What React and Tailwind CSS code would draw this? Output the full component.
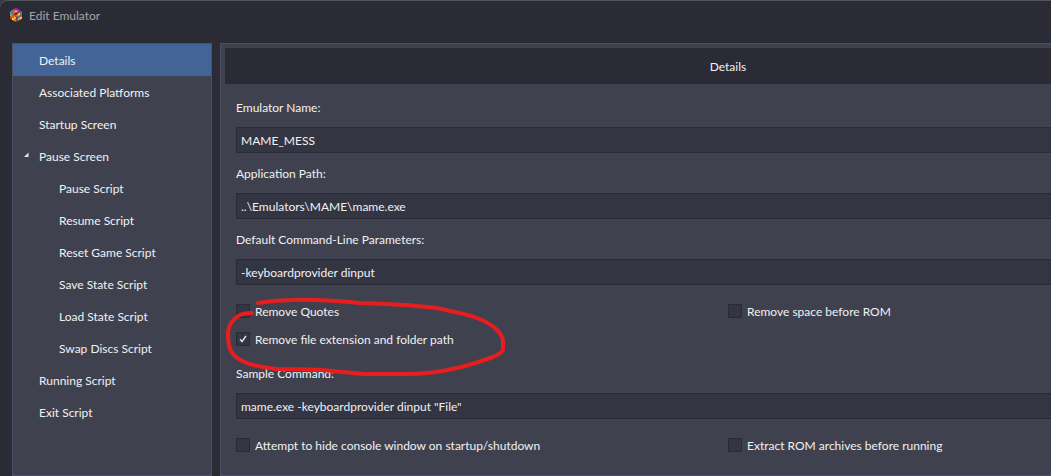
import { useState } from "react";

const sections = [
  { name: "Details" },
  { name: "Associated Platforms" },
  { name: "Startup Screen" },
  { name: "Pause Screen", open: true },
  { name: "Pause Script", child: true },
  { name: "Resume Script", child: true },
  { name: "Reset Game Script", child: true },
  { name: "Save State Script", child: true },
  { name: "Load State Script", child: true },
  { name: "Swap Discs Script", child: true },
  { name: "Running Script" },
  { name: "Exit Script" },
];

function CubeLogo() {
  return (
    <svg viewBox="0 0 14 14" className="size-[14px] shrink-0" aria-hidden="true">
      <path d="M7 0 13 3.2 7 6.6 1 3.2Z" fill="#5c1f66" />
      <path d="M1 3.2 7 6.6V14L1 10.6Z" fill="#7a2a20" />
      <path d="M13 3.2 7 6.6V14L13 10.6Z" fill="#7a2a20" />
      <path d="M7 0 9 1.1 7 2.2 5 1.1Z" fill="#a02fb4" />
      <path d="M5 1.1 7 2.2 5 3.3 3 2.2Z" fill="#e8502a" />
      <path d="M9 1.1 11 2.2 9 3.3 7 2.2Z" fill="#b02fc0" />
      <path d="M7 2.2 9 3.3 7 4.4 5 3.3Z" fill="#f5c42c" />
      <path d="M11 2.2 13 3.2 11 4.4 9 3.3Z" fill="#a02fb4" />
      <path d="M3 2.2 5 3.3 3 4.4 1 3.2Z" fill="#2aa5ea" />
      <path d="M9 3.3 11 4.4 9 5.5 7 4.4Z" fill="#ec3a2a" />
      <path d="M5 3.3 7 4.4 5 5.5 3 4.4Z" fill="#ef7d22" />
      <path d="M1 3.4 3 4.5V7L1 5.8Z" fill="#27b4ea" />
      <path d="M3 4.5 5 5.6V8L3 7Z" fill="#2b8fe8" />
      <path d="M5 5.6 7 6.7V9.2L5 8Z" fill="#ec3a2a" />
      <path d="M1 5.8 3 7V9.4L1 8.2Z" fill="#ef7d22" />
      <path d="M3 7 5 8V10.4L3 9.4Z" fill="#ec4a2a" />
      <path d="M5 8 7 9.2V11.5L5 10.4Z" fill="#f1e22d" />
      <path d="M3 9.4 5 10.4V12.8L3 11.7Z" fill="#f1e22d" />
      <path d="M1 8.2 3 9.4V11.7L1 10.6Z" fill="#e3332b" />
      <path d="M5 10.4 7 11.5V14L5 12.8Z" fill="#ef7d22" />
      <path d="M9 5.6 11 4.5V7L9 8Z" fill="#f1e22d" />
      <path d="M7 6.7 9 5.6V8L7 9.2Z" fill="#ef7d22" />
      <path d="M11 4.5 13 3.4V5.8L11 7Z" fill="#2b9fe0" />
      <path d="M7 9.2 9 8V10.4L7 11.5Z" fill="#a02fb4" />
      <path d="M9 8 11 7V9.4L9 10.4Z" fill="#2b8fe8" />
      <path d="M11 7 13 5.8V8.2L11 9.4Z" fill="#e3332b" />
      <path d="M9 10.4 11 9.4V11.7L9 12.8Z" fill="#8fc63a" />
      <path d="M11 9.4 13 8.2V10.6L11 11.7Z" fill="#f1e22d" />
      <path d="M7 11.5 9 10.4V12.8L7 14Z" fill="#e3332b" />
      <path d="M1 3.2 7 6.6 13 3.2M7 6.6V14" fill="none" stroke="#2b2b35" strokeWidth=".4" />
    </svg>
  );
}

function Field({ id, label, value }) {
  return (
    <div className="mb-[11px]">
      <label htmlFor={id} className="block leading-5">
        {label}
      </label>
      <input
        id={id}
        type="text"
        defaultValue={value}
        className="mt-[9px] block h-[26px] w-full border border-[#2a2b34] bg-[#343542] px-1 outline-none focus:border-[#426496]"
      />
    </div>
  );
}

function Check({ label, checked = false }) {
  return (
    <label className="flex h-7 items-center gap-[5px]">
      <span className="grid size-[14px] shrink-0 place-items-center">
        <input
          type="checkbox"
          defaultChecked={checked}
          className="peer col-start-1 row-start-1 size-[14px] appearance-none border border-[#2a2b34] bg-[#343542]"
        />
        <svg
          viewBox="0 0 14 14"
          className="pointer-events-none invisible col-start-1 row-start-1 size-[14px] peer-checked:visible"
          aria-hidden="true"
        >
          <path d="M4 7.2 6 9.6 10 3.8" fill="none" stroke="#f2f2f2" strokeWidth="1.3" />
        </svg>
      </span>
      <span className="pt-0.5 leading-5">{label}</span>
    </label>
  );
}

function Sidebar({ selected, onSelect }) {
  return (
    <nav className="w-[200px] shrink-0 border border-[#4d4f62] bg-[#40414e]">
      <ul>
        {sections.map((s) => (
          <li key={s.name}>
            <button
              type="button"
              onClick={() => onSelect(s.name)}
              className={`flex h-8 w-full items-center text-left ${s.child ? "pl-[46px]" : "pl-[10px]"} ${
                s.name === selected ? "bg-[#426496]" : ""
              }`}
            >
              {!s.child && (
                <svg viewBox="0 0 16 16" className="size-4 shrink-0" aria-hidden="true">
                  {s.open && <path d="M5.5 4.5V9H1Z" fill="#e6e6ea" />}
                </svg>
              )}
              <span className="pt-0.5">{s.name}</span>
            </button>
          </li>
        ))}
      </ul>
    </nav>
  );
}

export default function App() {
  const [selected, setSelected] = useState("Details");
  return (
    <div className="h-screen overflow-hidden bg-[#3c3c3e] font-[Lato,'Open_Sans',sans-serif] text-[12px] text-[#f1f1f3]">
      <div className="relative flex h-full min-w-[1248px] flex-col overflow-hidden rounded-tl-lg border-t border-[#555659] bg-[#2b2b35]">
        <header className="flex h-[42px] shrink-0 items-start gap-[6px] pt-[7px] pl-[9px] text-[#a3a3a8]">
          <CubeLogo />
          <h1 className="leading-4">Edit Emulator</h1>
        </header>
        <div className="flex grow gap-2 px-3">
          <Sidebar selected={selected} onSelect={setSelected} />
          <main className="grow border border-[#4d4f62] bg-[#40414e] p-1">
            <h2 className="flex h-9 items-center justify-center bg-[#2b2b35] pt-0.5">Details</h2>
            <form className="px-[11px] pt-[14px]">
              <Field id="name" label="Emulator Name:" value="MAME_MESS" />
              <Field id="path" label="Application Path:" value="..\Emulators\MAME\mame.exe" />
              <Field id="params" label="Default Command-Line Parameters:" value="-keyboardprovider dinput" />
              <div className="mb-[11px] grid grid-cols-2 pt-px">
                <Check label="Remove Quotes" />
                <Check label="Remove space before ROM" />
                <Check label="Remove file extension and folder path" checked />
              </div>
              <Field id="sample" label="Sample Command:" value={'mame.exe -keyboardprovider dinput "File"'} />
              <div className="grid grid-cols-2 pt-px">
                <Check label="Attempt to hide console window on startup/shutdown" />
                <Check label="Extract ROM archives before running" />
              </div>
            </form>
          </main>
        </div>
        <svg
          viewBox="220 294 290 86"
          className="pointer-events-none absolute top-[293px] left-[220px] h-[86px] w-[290px]"
          aria-hidden="true"
        >
          <path
            d="M258 303C270 301 280 300 293 300C316 299 338 301 360 303C380 304 398 304 417 306C430 307 440 308 450 311C460 313 469 315 477 318C485 321 492 325 497 330C501 334 503 338 503 342V350C501 353 498 355 493 357C482 361 470 365 457 368C440 372 423 374 407 374H363C352 373 343 372 333 371C314 369 295 369 277 369C268 368 261 367 253 365C246 363 241 361 236 357C232 354 230 350 229 345C228 341 228 336 228 332C229 328 229 326 231 323C234 319 236 317 240 315C244 313 248 313 252 313"
            fill="none"
            stroke="#e81e1e"
            strokeWidth="4"
            strokeLinecap="round"
            strokeLinejoin="round"
          />
        </svg>
      </div>
    </div>
  );
}
